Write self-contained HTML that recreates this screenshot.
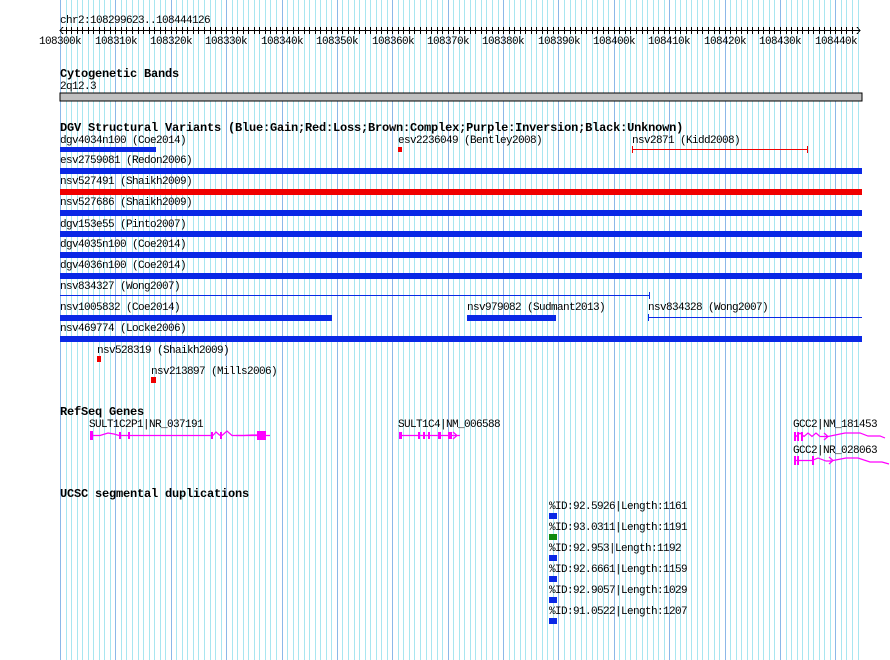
<!DOCTYPE html>
<html><head><style>
body{margin:0;background:#fff;}
#c{position:relative;width:890px;height:660px;overflow:hidden;font-family:"Liberation Mono",monospace;font-size:11px;letter-spacing:-0.6px;color:#000;}
.t{position:absolute;line-height:12px;white-space:nowrap;margin-top:1px;}
.b{position:absolute;font-weight:bold;font-size:12px;letter-spacing:-0.2px;line-height:13px;white-space:nowrap;margin-top:1px;}
.r{position:absolute;}
.bl{background:#0a28e6;}
.rd{background:#f00000;}
.mg{background:#ff00ff;}
</style></head><body><div id="c">
<svg class="r" style="left:0;top:0" width="890" height="660" shape-rendering="crispEdges">
<path stroke="#a8e6f0" stroke-width="1" fill="none" d="M66.5 0V660M71.5 0V660M77.5 0V660M82.5 0V660M88.5 0V660M93.5 0V660M99.5 0V660M104.5 0V660M110.5 0V660M121.5 0V660M126.5 0V660M132.5 0V660M138.5 0V660M143.5 0V660M149.5 0V660M154.5 0V660M160.5 0V660M165.5 0V660M176.5 0V660M182.5 0V660M187.5 0V660M193.5 0V660M198.5 0V660M204.5 0V660M210.5 0V660M215.5 0V660M221.5 0V660M232.5 0V660M237.5 0V660M243.5 0V660M248.5 0V660M254.5 0V660M259.5 0V660M265.5 0V660M270.5 0V660M276.5 0V660M287.5 0V660M293.5 0V660M298.5 0V660M304.5 0V660M309.5 0V660M315.5 0V660M320.5 0V660M326.5 0V660M331.5 0V660M342.5 0V660M348.5 0V660M354.5 0V660M359.5 0V660M365.5 0V660M370.5 0V660M376.5 0V660M381.5 0V660M387.5 0V660M398.5 0V660M403.5 0V660M409.5 0V660M414.5 0V660M420.5 0V660M426.5 0V660M431.5 0V660M437.5 0V660M442.5 0V660M453.5 0V660M459.5 0V660M464.5 0V660M470.5 0V660M475.5 0V660M481.5 0V660M486.5 0V660M492.5 0V660M498.5 0V660M509.5 0V660M514.5 0V660M520.5 0V660M525.5 0V660M531.5 0V660M536.5 0V660M542.5 0V660M547.5 0V660M553.5 0V660M564.5 0V660M570.5 0V660M575.5 0V660M581.5 0V660M586.5 0V660M592.5 0V660M597.5 0V660M603.5 0V660M608.5 0V660M619.5 0V660M625.5 0V660M630.5 0V660M636.5 0V660M642.5 0V660M647.5 0V660M653.5 0V660M658.5 0V660M664.5 0V660M675.5 0V660M680.5 0V660M686.5 0V660M691.5 0V660M697.5 0V660M702.5 0V660M708.5 0V660M714.5 0V660M719.5 0V660M730.5 0V660M736.5 0V660M741.5 0V660M747.5 0V660M752.5 0V660M758.5 0V660M763.5 0V660M769.5 0V660M774.5 0V660M786.5 0V660M791.5 0V660M797.5 0V660M802.5 0V660M808.5 0V660M813.5 0V660M819.5 0V660M824.5 0V660M830.5 0V660M841.5 0V660M846.5 0V660M852.5 0V660M858.5 0V660"/>
<path stroke="#8cb8e8" stroke-width="1" fill="none" d="M60.5 0V660M115.5 0V660M171.5 0V660M226.5 0V660M282.5 0V660M337.5 0V660M392.5 0V660M448.5 0V660M503.5 0V660M558.5 0V660M614.5 0V660M669.5 0V660M725.5 0V660M780.5 0V660M835.5 0V660"/>
<path stroke="#000" fill="none" d="M60 30.5H860M63 27L60 30.5L63 34M857 27L860 30.5L857 34"/>
<path stroke="#000" fill="none" d="M66.5 27V34M71.5 27V34M77.5 27V34M82.5 27V34M88.5 27V34M93.5 27V34M99.5 27V34M104.5 27V34M110.5 27V34M115.5 27V34M121.5 27V34M126.5 27V34M132.5 27V34M138.5 27V34M143.5 27V34M149.5 27V34M154.5 27V34M160.5 27V34M165.5 27V34M171.5 27V34M176.5 27V34M182.5 27V34M187.5 27V34M193.5 27V34M198.5 27V34M204.5 27V34M210.5 27V34M215.5 27V34M221.5 27V34M226.5 27V34M232.5 27V34M237.5 27V34M243.5 27V34M248.5 27V34M254.5 27V34M259.5 27V34M265.5 27V34M270.5 27V34M276.5 27V34M282.5 27V34M287.5 27V34M293.5 27V34M298.5 27V34M304.5 27V34M309.5 27V34M315.5 27V34M320.5 27V34M326.5 27V34M331.5 27V34M337.5 27V34M342.5 27V34M348.5 27V34M354.5 27V34M359.5 27V34M365.5 27V34M370.5 27V34M376.5 27V34M381.5 27V34M387.5 27V34M392.5 27V34M398.5 27V34M403.5 27V34M409.5 27V34M414.5 27V34M420.5 27V34M426.5 27V34M431.5 27V34M437.5 27V34M442.5 27V34M448.5 27V34M453.5 27V34M459.5 27V34M464.5 27V34M470.5 27V34M475.5 27V34M481.5 27V34M486.5 27V34M492.5 27V34M498.5 27V34M503.5 27V34M509.5 27V34M514.5 27V34M520.5 27V34M525.5 27V34M531.5 27V34M536.5 27V34M542.5 27V34M547.5 27V34M553.5 27V34M558.5 27V34M564.5 27V34M570.5 27V34M575.5 27V34M581.5 27V34M586.5 27V34M592.5 27V34M597.5 27V34M603.5 27V34M608.5 27V34M614.5 27V34M619.5 27V34M625.5 27V34M630.5 27V34M636.5 27V34M642.5 27V34M647.5 27V34M653.5 27V34M658.5 27V34M664.5 27V34M669.5 27V34M675.5 27V34M680.5 27V34M686.5 27V34M691.5 27V34M697.5 27V34M702.5 27V34M708.5 27V34M714.5 27V34M719.5 27V34M725.5 27V34M730.5 27V34M736.5 27V34M741.5 27V34M747.5 27V34M752.5 27V34M758.5 27V34M763.5 27V34M769.5 27V34M774.5 27V34M780.5 27V34M786.5 27V34M791.5 27V34M797.5 27V34M802.5 27V34M808.5 27V34M813.5 27V34M819.5 27V34M824.5 27V34M830.5 27V34M835.5 27V34M841.5 27V34M846.5 27V34M852.5 27V34"/>
<rect x="60" y="93" width="802" height="8" fill="#c0c0c0" stroke="#000" stroke-width="1"/>
<path d="M632 149.5 H808 M632.5 146 V153 M807.5 146 V153" stroke="#f00000" fill="none"/>
<path d="M60 295.5 H650 M649.5 292 V299" stroke="#0a28e6" fill="none"/>
<path d="M648 317.5 H862 M648.5 314 V321" stroke="#0a28e6" fill="none"/>
</svg>
<svg class="r" style="left:0;top:0" width="890" height="660">
<g stroke="#ff00ff" fill="none" stroke-width="1.2">
<path d="M92 435.5 H100 L108 433 L114 434 L119 435.5 M121 435.5 H212 M213 435.5 L216 432 L220 435.5 M222 435.5 L227 431 L232 435.5 H240 L262 435.5 M240 435.5 H270 Z"/>
<path d="M236 435.5 H244 L252 435 H257"/>
<path d="M401 435.5 H460 M453 432 L457 435.5 L453 439"/>
<path d="M796 436.5 L800 433 L804 436.5 L808 433 L812 436.5 L816 433 L820 436.5 H828 M824 433 L828 436.5 L824 440 M828 436.5 L845 433 H860 L868 436 H880 L885 438"/>
<path d="M796 460.5 H812 L818 458 L826 461 H832 M829 457 L833 460.5 L829 464 M833 460.5 L846 458 H858 L870 462 H882 L889 464"/>
</g>
</svg>
<div class="t" style="left:60px;top:14px">chr2:108299623..108444126</div>
<div class="t" style="left:39px;top:35px">108300k</div>
<div class="t" style="left:95px;top:35px">108310k</div>
<div class="t" style="left:150px;top:35px">108320k</div>
<div class="t" style="left:205px;top:35px">108330k</div>
<div class="t" style="left:261px;top:35px">108340k</div>
<div class="t" style="left:316px;top:35px">108350k</div>
<div class="t" style="left:372px;top:35px">108360k</div>
<div class="t" style="left:427px;top:35px">108370k</div>
<div class="t" style="left:482px;top:35px">108380k</div>
<div class="t" style="left:538px;top:35px">108390k</div>
<div class="t" style="left:593px;top:35px">108400k</div>
<div class="t" style="left:648px;top:35px">108410k</div>
<div class="t" style="left:704px;top:35px">108420k</div>
<div class="t" style="left:759px;top:35px">108430k</div>
<div class="t" style="left:815px;top:35px">108440k</div>

<div class="b" style="left:60px;top:67px">Cytogenetic Bands</div>
<div class="t" style="left:60px;top:80px">2q12.3</div>

<div class="b" style="left:60px;top:121px">DGV Structural Variants (Blue:Gain;Red:Loss;Brown:Complex;Purple:Inversion;Black:Unknown)</div>
<div class="t" style="left:60px;top:134px">dgv4034n100 (Coe2014)</div>
<div class="r bl" style="left:60px;top:147px;width:96px;height:5px"></div>
<div class="t" style="left:398px;top:134px">esv2236049 (Bentley2008)</div>
<div class="r rd" style="left:398px;top:147px;width:4px;height:5px"></div>
<div class="t" style="left:632px;top:134px">nsv2871 (Kidd2008)</div>

<div class="t" style="left:60px;top:154px">esv2759081 (Redon2006)</div>
<div class="r bl" style="left:60px;top:168px;width:802px;height:6px"></div>
<div class="t" style="left:60px;top:175px">nsv527491 (Shaikh2009)</div>
<div class="r rd" style="left:60px;top:189px;width:802px;height:6px"></div>
<div class="t" style="left:60px;top:196px">nsv527686 (Shaikh2009)</div>
<div class="r bl" style="left:60px;top:210px;width:802px;height:6px"></div>
<div class="t" style="left:60px;top:218px">dgv153e55 (Pinto2007)</div>
<div class="r bl" style="left:60px;top:231px;width:802px;height:6px"></div>
<div class="t" style="left:60px;top:238px">dgv4035n100 (Coe2014)</div>
<div class="r bl" style="left:60px;top:252px;width:802px;height:6px"></div>
<div class="t" style="left:60px;top:259px">dgv4036n100 (Coe2014)</div>
<div class="r bl" style="left:60px;top:273px;width:802px;height:6px"></div>
<div class="t" style="left:60px;top:280px">nsv834327 (Wong2007)</div>
<div class="t" style="left:60px;top:301px">nsv1005832 (Coe2014)</div>
<div class="r bl" style="left:60px;top:315px;width:272px;height:6px"></div>
<div class="t" style="left:467px;top:301px">nsv979082 (Sudmant2013)</div>
<div class="r bl" style="left:467px;top:315px;width:89px;height:6px"></div>
<div class="t" style="left:648px;top:301px">nsv834328 (Wong2007)</div>
<div class="t" style="left:60px;top:322px">nsv469774 (Locke2006)</div>
<div class="r bl" style="left:60px;top:336px;width:802px;height:6px"></div>
<div class="t" style="left:97px;top:344px">nsv528319 (Shaikh2009)</div>
<div class="r rd" style="left:97px;top:356px;width:4px;height:6px"></div>
<div class="t" style="left:151px;top:365px">nsv213897 (Mills2006)</div>
<div class="r rd" style="left:151px;top:377px;width:5px;height:6px"></div>

<div class="b" style="left:60px;top:405px">RefSeq Genes</div>
<div class="t" style="left:89px;top:418px">SULT1C2P1|NR_037191</div>
<div class="r mg" style="left:90px;top:431px;width:3px;height:9px"></div>
<div class="r mg" style="left:119px;top:432px;width:2px;height:7px"></div>
<div class="r mg" style="left:128px;top:432px;width:2px;height:7px"></div>
<div class="r mg" style="left:211px;top:432px;width:2px;height:7px"></div>
<div class="r mg" style="left:220px;top:432px;width:2px;height:7px"></div>
<div class="r mg" style="left:257px;top:431px;width:9px;height:9px"></div>
<div class="t" style="left:398px;top:418px">SULT1C4|NM_006588</div>
<div class="r mg" style="left:399px;top:432px;width:3px;height:7px"></div>
<div class="r mg" style="left:418px;top:432px;width:2px;height:7px"></div>
<div class="r mg" style="left:423px;top:432px;width:2px;height:7px"></div>
<div class="r mg" style="left:428px;top:432px;width:2px;height:7px"></div>
<div class="r mg" style="left:438px;top:432px;width:3px;height:7px"></div>
<div class="r mg" style="left:448px;top:432px;width:4px;height:7px"></div>
<div class="t" style="left:793px;top:418px">GCC2|NM_181453</div>
<div class="r mg" style="left:794px;top:432px;width:2px;height:9px"></div>
<div class="r mg" style="left:797px;top:432px;width:2px;height:9px"></div>
<div class="r mg" style="left:801px;top:432px;width:2px;height:9px"></div>
<div class="t" style="left:793px;top:444px">GCC2|NR_028063</div>
<div class="r mg" style="left:794px;top:456px;width:2px;height:9px"></div>
<div class="r mg" style="left:797px;top:456px;width:2px;height:9px"></div>
<div class="r mg" style="left:812px;top:456px;width:2px;height:9px"></div>

<div class="b" style="left:60px;top:487px">UCSC segmental duplications</div>
<div class="t" style="left:549px;top:500px">%ID:92.5926|Length:1161</div>
<div class="r bl" style="left:549px;top:513px;width:8px;height:6px"></div>
<div class="t" style="left:549px;top:521px">%ID:93.0311|Length:1191</div>
<div class="r" style="left:549px;top:534px;width:8px;height:6px;background:#108a10"></div>
<div class="t" style="left:549px;top:542px">%ID:92.953|Length:1192</div>
<div class="r bl" style="left:549px;top:555px;width:8px;height:6px"></div>
<div class="t" style="left:549px;top:563px">%ID:92.6661|Length:1159</div>
<div class="r bl" style="left:549px;top:576px;width:8px;height:6px"></div>
<div class="t" style="left:549px;top:584px">%ID:92.9057|Length:1029</div>
<div class="r bl" style="left:549px;top:597px;width:8px;height:6px"></div>
<div class="t" style="left:549px;top:605px">%ID:91.0522|Length:1207</div>
<div class="r bl" style="left:549px;top:618px;width:8px;height:6px"></div>
</div></body></html>
